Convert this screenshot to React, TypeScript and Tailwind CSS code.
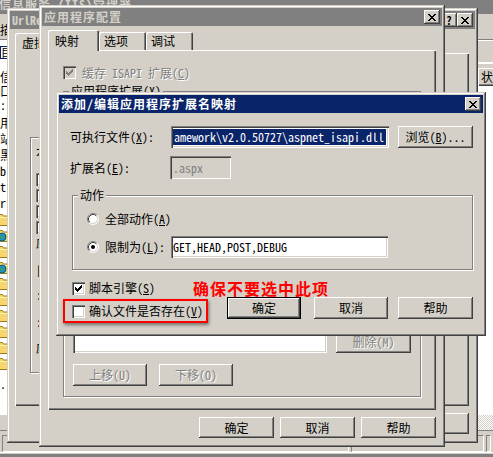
import React from "react";

const WIN =
  "shadow-[inset_-1px_-1px_0_#404040,inset_1px_1px_0_#d4d0c8,inset_-2px_-2px_0_#808080,inset_2px_2px_0_#ffffff]";
const SUNK =
  "shadow-[inset_1px_1px_0_#808080,inset_2px_2px_0_#404040,inset_-1px_-1px_0_#ffffff,inset_-2px_-2px_0_#d4d0c8]";
const PANEL = "shadow-[inset_1px_1px_0_#ffffff,inset_-1px_-1px_0_#404040,inset_-2px_-2px_0_#808080]";
const TAB = "shadow-[inset_1px_1px_0_#ffffff,inset_-1px_0_0_#404040,inset_-2px_0_0_#808080]";
const GROUP = "border border-[#808080] shadow-[inset_1px_1px_0_#ffffff,1px_1px_0_#ffffff]";
const DIS = "text-[#808080] [text-shadow:1px_1px_0_#ffffff]";

function pixels(rows: string[], color: string) {
  const out: React.ReactNode[] = [];
  rows.forEach((r, y) =>
    r.split("").forEach((c, x) => {
      if (c === "X") out.push(<rect key={`${x}-${y}`} x={x} y={y} width={1} height={1} fill={color} />);
    })
  );
  return out;
}

function CloseGlyph() {
  const rows = ["XX....XX", ".XX..XX.", "..XXXX..", "...XX...", "..XXXX..", ".XX..XX.", "XX....XX"];
  return (
    <svg width="8" height="7" viewBox="0 0 8 7" shapeRendering="crispEdges">
      {pixels(rows, "#000")}
    </svg>
  );
}

function CheckGlyph({ color }: { color: string }) {
  const rows = ["......X", ".....XX", "X...XXX", "XX.XXX.", "XXXXX..", ".XXX...", "..X...."];
  return (
    <svg width="7" height="7" viewBox="0 0 7 7" shapeRendering="crispEdges">
      {pixels(rows, color)}
    </svg>
  );
}

function TitleBtn({ children }: { children: React.ReactNode }) {
  return (
    <div className="w-[16px] h-[14px] shrink-0 bg-[#d4d0c8] flex items-center justify-center shadow-[inset_-1px_-1px_0_#404040,inset_1px_1px_0_#ffffff,inset_-2px_-2px_0_#808080,inset_2px_2px_0_#d4d0c8]">
      {children}
    </div>
  );
}

function Btn({
  children,
  className = "",
  disabled,
  def,
}: {
  children?: React.ReactNode;
  className?: string;
  disabled?: boolean;
  def?: boolean;
}) {
  return (
    <div
      className={`shrink-0 flex items-center justify-center bg-[#d4d0c8] leading-[14px] ${
        def
          ? "border border-black shadow-[inset_-1px_-1px_0_#404040,inset_1px_1px_0_#ffffff,inset_-2px_-2px_0_#808080]"
          : "shadow-[inset_-1px_-1px_0_#404040,inset_1px_1px_0_#ffffff,inset_-2px_-2px_0_#808080,inset_2px_2px_0_#d4d0c8]"
      } ${disabled ? DIS : "text-black"} ${className}`}
    >
      {children}
    </div>
  );
}

function Check({ checked, disabled }: { checked?: boolean; disabled?: boolean }) {
  return (
    <span
      className={`w-[13px] h-[13px] shrink-0 inline-flex items-center justify-center ${
        disabled ? "bg-[#d4d0c8]" : "bg-white"
      } ${SUNK}`}
    >
      {checked && <CheckGlyph color={disabled ? "#808080" : "#000000"} />}
    </span>
  );
}

function Radio({ checked }: { checked?: boolean }) {
  return (
    <svg width="12" height="12" viewBox="0 0 12 12" className="shrink-0">
      <circle cx="6" cy="6" r="5" fill="#ffffff" />
      <path d="M2.11 9.89 A5.5 5.5 0 0 1 9.89 2.11" stroke="#808080" fill="none" />
      <path d="M9.89 2.11 A5.5 5.5 0 0 1 2.11 9.89" stroke="#ffffff" fill="none" />
      <path d="M2.82 9.18 A4.5 4.5 0 0 1 9.18 2.82" stroke="#404040" fill="none" />
      <path d="M9.18 2.82 A4.5 4.5 0 0 1 2.82 9.18" stroke="#d4d0c8" fill="none" />
      {checked && <circle cx="6" cy="6" r="2" fill="#000000" />}
    </svg>
  );
}

function Folder({ globe }: { globe?: boolean }) {
  return (
    <svg width="16" height="14" viewBox="0 0 16 14" className="shrink-0">
      <path d="M0.5 2.5h5l1 1.5h8.5v9.5h-14.5z" fill="#f5d76e" stroke="#a07820" />
      <path d="M1.5 5.5h13" stroke="#fff3b0" />
      {globe && <circle cx="5" cy="9" r="4" fill="#2a8fb5" stroke="#105a78" />}
      {globe && <path d="M3 8h3v2h-2z" fill="#3aa04a" />}
    </svg>
  );
}

function IISBackground() {
  const trees = ["用", "站", "黑", "b", "t", "r"];
  const folders = [false, true, false, true, false, false, false, false, false, false];
  return (
    <div className="absolute inset-0 z-0 flex flex-col bg-[#d4d0c8]">
      <div className="h-[14px] shrink-0 bg-[#808080] overflow-hidden">
        <div className="-mt-[3px] -ml-[1px] text-[#d4d0c8] font-bold tracking-[1px] leading-[14px]">
          信息服务 (IIS)管理器
        </div>
      </div>
      <div className="h-[416px] flex shrink-0">
        <div className="w-[240px] shrink-0 flex flex-col">
          <div className="h-[26px] pt-[9px] leading-[14px] border-b border-[#808080]">描述</div>
          <div className="h-[375px] bg-white flex flex-col overflow-hidden leading-[14px]">
            <div className="mt-[6px] h-[13px] w-[14px] border border-[#0a246a] leading-[11px] text-[11px]">目</div>
            <div className="mt-[11px] h-[14px]">信</div>
            <div className="h-[14px]">口</div>
            <div className="h-[14px]">:</div>
            <div className="mt-[3px]" />
            {trees.map((t) => (
              <div key={t} className="h-[16px] leading-[16px]">
                {t}
              </div>
            ))}
            {folders.map((g, i) => (
              <div key={i} className="h-[16px] flex items-center -ml-[3px]">
                <Folder globe={g} />
              </div>
            ))}
            <div className="mt-[6px] h-[14px]">.</div>
          </div>
          <div className="flex-1" />
        </div>
        <div className="flex-1 flex flex-col">
          <div className="h-[26px] border-b border-[#808080]" />
          <div className="h-[23px] border-t border-white border-b border-[#808080]" />
          <div className="h-[5px] border-t border-white" />
          <div className="h-[18px] flex">
            <div className={`w-[238px] shrink-0 ${PANEL}`} />
            <div className={`flex-1 pl-[3px] leading-[18px] ${PANEL}`}>状态</div>
          </div>
          <div className="h-[329px] bg-white" />
          <div className="h-[15px] bg-[image:repeating-conic-gradient(#d4d0c8_0%_25%,#ffffff_0%_50%)] bg-[length:2px_2px]" />
        </div>
      </div>
      <div className="h-[22px] shrink-0 border-t border-[#808080] pt-[4px] px-[2px] flex gap-[2px]">
        <div className="w-[347px] h-[17px] border-t border-l border-[#808080] border-b border-r border-b-white border-r-white" />
        <div className="w-[133px] h-[17px] border-t border-l border-[#808080] border-b border-r border-b-white border-r-white" />
        <div className="flex-1 h-[17px] border-t border-l border-[#808080] border-b border-r border-b-white border-r-white" />
      </div>
      <div className="h-[5px] shrink-0 border-t border-white flex flex-col">
        <div className="mt-auto h-[3px] bg-[#808080]" />
      </div>
    </div>
  );
}

function Window1() {
  return (
    <div className={`absolute z-10 left-[7px] top-[8px] w-[471px] h-[435px] bg-[#d4d0c8] p-[3px] flex flex-col ${WIN}`}>
      <div className="h-[18px] shrink-0 bg-[#808080] flex items-center pl-[2px] pr-[2px]">
        <span className="flex-1 text-[#d4d0c8] font-bold leading-[14px]">UrlRewriter 属性</span>
        <TitleBtn>
          <span className="font-bold text-[11px] leading-[12px]">?</span>
        </TitleBtn>
        <TitleBtn>
          <CloseGlyph />
        </TitleBtn>
      </div>
      <div className="flex flex-col pl-[5px] pr-[6px]">
        <div className="mt-[2px] h-[22px] flex items-end relative z-10">
          <div className={`h-[21px] -mb-[1px] w-[64px] bg-[#d4d0c8] pl-[7px] pt-[3px] leading-[14px] rounded-t-[2px] ${TAB}`}>
            虚拟目录
          </div>
          <div className={`h-[18px] w-[40px] pl-[5px] pt-[2px] leading-[14px] rounded-t-[2px] ${TAB}`}>文档</div>
          <div className={`h-[18px] w-[76px] pl-[5px] pt-[2px] leading-[14px] rounded-t-[2px] ${TAB}`}>目录安全性</div>
          <div className={`h-[18px] w-[58px] pl-[5px] pt-[2px] leading-[14px] rounded-t-[2px] ${TAB}`}>HTTP 头</div>
        </div>
        <div className={`h-[353px] flex flex-col ${PANEL}`}>
          <div className={`mt-[84px] ml-[15px] w-[400px] h-[236px] flex flex-col pl-[5px] leading-[14px] ${GROUP}`}>
            <span className="-mt-[8px] ml-[10px] px-[2px] bg-[#d4d0c8] self-start">此资源的内容来自:</span>
            <div className="mt-[1px] h-[14px]">本地路径(C):</div>
            <div className="mt-[12px] h-[16px] flex items-center gap-[4px]">
              <Check checked />
              <span>脚本资源访问(T)</span>
            </div>
            <div className="h-[16px] flex items-center gap-[4px]">
              <Check checked />
              <span>读取(R)</span>
            </div>
            <div className="h-[16px] flex items-center gap-[4px]">
              <Check />
              <span>写入(W)</span>
            </div>
            <div className="h-[16px] flex items-center gap-[4px]">
              <Check />
              <span>目录浏览(B)</span>
            </div>
            <div className="mt-[1px] h-[14px]">应用程序设置</div>
            <div className="mt-[13px] h-[14px]">[应用程序名(M):</div>
            <div className="mt-[11px] h-[14px]">:开始位置:</div>
            <div className="mt-[13px] h-[14px]">:执行权限(P):</div>
            <div className="mt-[12px] h-[14px]">应用程序池(N):</div>
          </div>
        </div>
        <div className="mt-[7px] h-[21px] flex justify-end gap-[6px]">
          <Btn className="w-[75px] h-[21px]">确定</Btn>
          <Btn className="w-[75px] h-[21px]">取消</Btn>
          <Btn className="w-[75px] h-[21px]">应用(A)</Btn>
          <Btn className="w-[75px] h-[21px]">帮助</Btn>
        </div>
      </div>
    </div>
  );
}

function Window2() {
  return (
    <div className={`absolute z-20 left-[39px] top-[5px] w-[406px] h-[442px] bg-[#d4d0c8] p-[3px] flex flex-col ${WIN}`}>
      <div className="h-[18px] shrink-0 bg-[#808080] flex items-center justify-between pl-[2px] pr-[2px]">
        <span className="text-[#d4d0c8] font-bold tracking-[1px] leading-[14px]">应用程序配置</span>
        <TitleBtn>
          <CloseGlyph />
        </TitleBtn>
      </div>
      <div className="flex flex-col px-[6px]">
        <div className="mt-[4px] h-[20px] flex items-end relative z-10">
          <div className={`h-[21px] -mb-[1px] w-[51px] bg-[#d4d0c8] pl-[7px] pt-[4px] leading-[14px] rounded-t-[2px] ${TAB}`}>
            映射
          </div>
          <div className={`h-[18px] w-[47px] pl-[5px] pt-[2px] leading-[14px] rounded-t-[2px] ${TAB}`}>选项</div>
          <div className={`h-[18px] w-[47px] pl-[5px] pt-[2px] leading-[14px] rounded-t-[2px] ${TAB}`}>调试</div>
        </div>
        <div className={`h-[360px] flex flex-col ${PANEL}`}>
          <div className="mt-[16px] ml-[15px] h-[13px] flex items-center">
            <Check checked disabled />
            <span className={`ml-[6px] leading-[14px] ${DIS}`}>
              缓存 ISAPI 扩展(<u>C</u>)
            </span>
          </div>
          <div className={`mt-[12px] ml-[15px] w-[358px] h-[306px] flex flex-col leading-[14px] ${GROUP}`}>
            <span className="-mt-[8px] ml-[5px] px-[2px] bg-[#d4d0c8] self-start">
              应用程序扩展(<u>X</u>)
            </span>
            <div className="mt-[7px] ml-[9px] flex">
              <div className={`w-[254px] h-[248px] bg-white ${SUNK}`} />
              <div className="ml-[9px] flex flex-col justify-end gap-[6px]">
                <Btn className="w-[75px] h-[22px]">添加(D)...</Btn>
                <Btn className="w-[75px] h-[22px]" disabled>
                  编辑(E)...
                </Btn>
                <Btn className="w-[75px] h-[22px]" disabled>
                  删除(M)
                </Btn>
              </div>
            </div>
            <div className="mt-[11px] ml-[9px] flex gap-[12px]">
              <Btn className="w-[74px] h-[22px]" disabled>
                上移(U)
              </Btn>
              <Btn className="w-[74px] h-[22px]" disabled>
                下移(O)
              </Btn>
            </div>
          </div>
        </div>
        <div className="mt-[7px] h-[21px] flex justify-end gap-[6px]">
          <Btn className="w-[75px] h-[21px]">确定</Btn>
          <Btn className="w-[75px] h-[21px]">取消</Btn>
          <Btn className="w-[75px] h-[21px]">帮助</Btn>
        </div>
      </div>
    </div>
  );
}

function Window3() {
  return (
    <div className={`absolute z-30 left-[56px] top-[92px] w-[430px] h-[244px] bg-[#d4d0c8] p-[3px] flex flex-col leading-[14px] ${WIN}`}>
      <div className="h-[18px] shrink-0 bg-[#0a246a] flex items-center justify-between pl-[2px] pr-[2px]">
        <span className="text-white font-bold tracking-[1px]">添加/编辑应用程序扩展名映射</span>
        <TitleBtn>
          <CloseGlyph />
        </TitleBtn>
      </div>
      <div className="flex flex-col">
        <div className="mt-[13px] h-[22px] flex items-center">
          <span className="ml-[11px] w-[101px]">
            可执行文件(<u>X</u>):
          </span>
          <div className={`w-[218px] h-[22px] bg-white flex items-center pl-[2px] overflow-hidden ${SUNK}`}>
            <span className="bg-[#0a246a] text-white pl-[1px] pr-[2px] leading-[16px]">
              amework\v2.0.50727\aspnet_isapi.dll
            </span>
          </div>
          <Btn className="ml-[9px] w-[75px] h-[22px]">
            浏览(<u>B</u>)...
          </Btn>
        </div>
        <div className="mt-[8px] h-[23px] flex items-center">
          <span className="ml-[11px] w-[100px]">
            扩展名(<u>E</u>):
          </span>
          <div className={`w-[61px] h-[23px] bg-[#d4d0c8] flex items-center pl-[3px] text-[#808080] ${SUNK}`}>.aspx</div>
        </div>
        <div className={`mt-[16px] ml-[13px] w-[401px] h-[75px] flex flex-col ${GROUP}`}>
          <span className="-mt-[8px] ml-[5px] px-[2px] bg-[#d4d0c8] self-start">动作</span>
          <div className="mt-[9px] h-[16px] flex items-center pl-[14px]">
            <Radio />
            <span className="ml-[6px]">
              全部动作(<u>A</u>)
            </span>
          </div>
          <div className="mt-[9px] h-[22px] flex items-center pl-[14px]">
            <Radio checked />
            <span className="ml-[6px] w-[66px]">
              限制为(<u>L</u>):
            </span>
            <div className={`w-[217px] h-[22px] bg-white flex items-center pl-[2px] ${SUNK}`}>GET,HEAD,POST,DEBUG</div>
          </div>
        </div>
        <div className="mt-[10px] h-[16px] flex items-center">
          <div className="ml-[13px] w-[121px] flex items-center">
            <Check checked />
            <span className="ml-[4px]">
              脚本引擎(<u>S</u>)
            </span>
          </div>
          <span className="text-[#ff0000] font-bold text-[16px] leading-[16px] tracking-[1px] font-['Noto_Sans_CJK_SC',sans-serif]">
            确保不要选中此项
          </span>
        </div>
        <div className="mt-[1px] flex items-start">
          <div className="ml-[4px] mt-[2px] w-[145px] h-[24px] border-2 border-[#ff0000] flex items-center pl-[7px] shadow-[1px_2px_3px_rgba(0,0,0,0.45)]">
            <Check />
            <span className="ml-[4px]">
              确认文件是否存在(<u>V</u>)
            </span>
          </div>
          <Btn className="ml-[19px] w-[74px] h-[22px]" def>
            确定
          </Btn>
          <Btn className="ml-[13px] w-[74px] h-[22px]">取消</Btn>
          <Btn className="ml-[10px] w-[75px] h-[22px]">帮助</Btn>
        </div>
      </div>
    </div>
  );
}

export default function App() {
  return (
    <div className="relative w-[493px] h-[457px] overflow-hidden bg-[#d4d0c8] text-black text-[12px] leading-[14px] whitespace-nowrap font-['Noto_Sans_Mono_CJK_SC','Noto_Sans_CJK_SC',sans-serif]">
      <IISBackground />
      <Window1 />
      <Window2 />
      <Window3 />
    </div>
  );
}
